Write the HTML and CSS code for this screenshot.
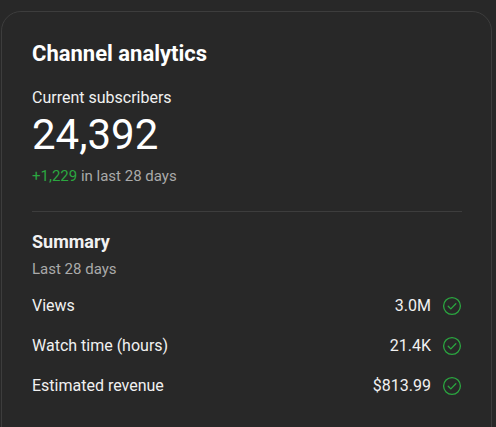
FILE: index.html
```html
<!DOCTYPE html>
<html lang="en">
<head>
    <meta charset="UTF-8">
    <title>Channel analytics</title>
    <link rel="stylesheet" href="styles.css">
</head>
<body>
  <main class="page">
    <section class="analytics-card">
      <h2 class="card-title">Channel analytics</h2>

      <div class="subs">
        <div class="subs-label">Current subscribers</div>
        <div class="subs-count">24,392</div>
        <div class="subs-change"><span class="up">+1,229</span> in last 28 days</div>
      </div>

      <hr class="divider">

      <div class="summary">
        <h3 class="summary-title">Summary</h3>
        <div class="summary-period">Last 28 days</div>

        <ul class="stats">
          <li class="stat-row">
            <span class="stat-name">Views</span>
            <span class="stat-value">3.0M</span>
            <svg class="check" viewBox="0 0 20 20"><circle cx="10" cy="10" r="8.4"/><path d="M6.2 10.3l2.6 2.6 5-5.1"/></svg>
          </li>
          <li class="stat-row">
            <span class="stat-name">Watch time (hours)</span>
            <span class="stat-value">21.4K</span>
            <svg class="check" viewBox="0 0 20 20"><circle cx="10" cy="10" r="8.4"/><path d="M6.2 10.3l2.6 2.6 5-5.1"/></svg>
          </li>
          <li class="stat-row">
            <span class="stat-name">Estimated revenue</span>
            <span class="stat-value">$813.99</span>
            <svg class="check" viewBox="0 0 20 20"><circle cx="10" cy="10" r="8.4"/><path d="M6.2 10.3l2.6 2.6 5-5.1"/></svg>
          </li>
        </ul>
      </div>
    </section>
  </main>
</body>
</html>
```

FILE: styles.css
```css
/* Page + card shell */
body {
  margin: 0;
  background: #282828;
  font-family: Roboto, "Liberation Sans", sans-serif;
  color: #f1f1f1;
  overflow: hidden;
}

.page {
  padding: 11px 4px 0 1px;
}

.analytics-card {
  box-sizing: border-box;
  width: 491px;
  background: #282828;
  border: 1px solid #3d3d3d;
  border-radius: 20px;
  padding: 28px 29px 40px 30px;
}

.card-title {
  margin: 0;
  font-size: 22px;
  line-height: 28px;
  font-weight: 700;
  color: #fff;
}

/* Subscriber block */
.subs {
  margin-top: 18px;
}

.subs-label {
  font-size: 16px;
  line-height: 24px;
}

.subs-count {
  font-size: 42px;
  line-height: 50px;
  color: #fff;
}

.subs-change {
  margin-top: 6px;
  font-size: 15px;
  line-height: 20px;
  color: #aaa;
}

.up {
  color: #2ba640;
}

.divider {
  margin: 25px 0 0;
  border: none;
  border-top: 1px solid #3d3d3d;
}

/* Summary list */
.summary-title {
  margin: 18px 0 0;
  font-size: 18px;
  line-height: 24px;
  font-weight: 700;
}

.summary-period {
  margin-top: 5px;
  font-size: 15px;
  line-height: 20px;
  color: #aaa;
}

.stats {
  list-style: none;
  margin: 7px 0 0;
  padding: 0;
}

.stat-row {
  display: flex;
  align-items: center;
  height: 40px;
  font-size: 16px;
  line-height: 24px;
}

.stat-name {
  flex: 1;
}

.stat-value {
  margin-right: 11px;
}

.check {
  width: 20px;
  height: 20px;
  fill: none;
  stroke: #2ba640;
  stroke-width: 1.3;
  stroke-linecap: round;
  stroke-linejoin: round;
}
```
